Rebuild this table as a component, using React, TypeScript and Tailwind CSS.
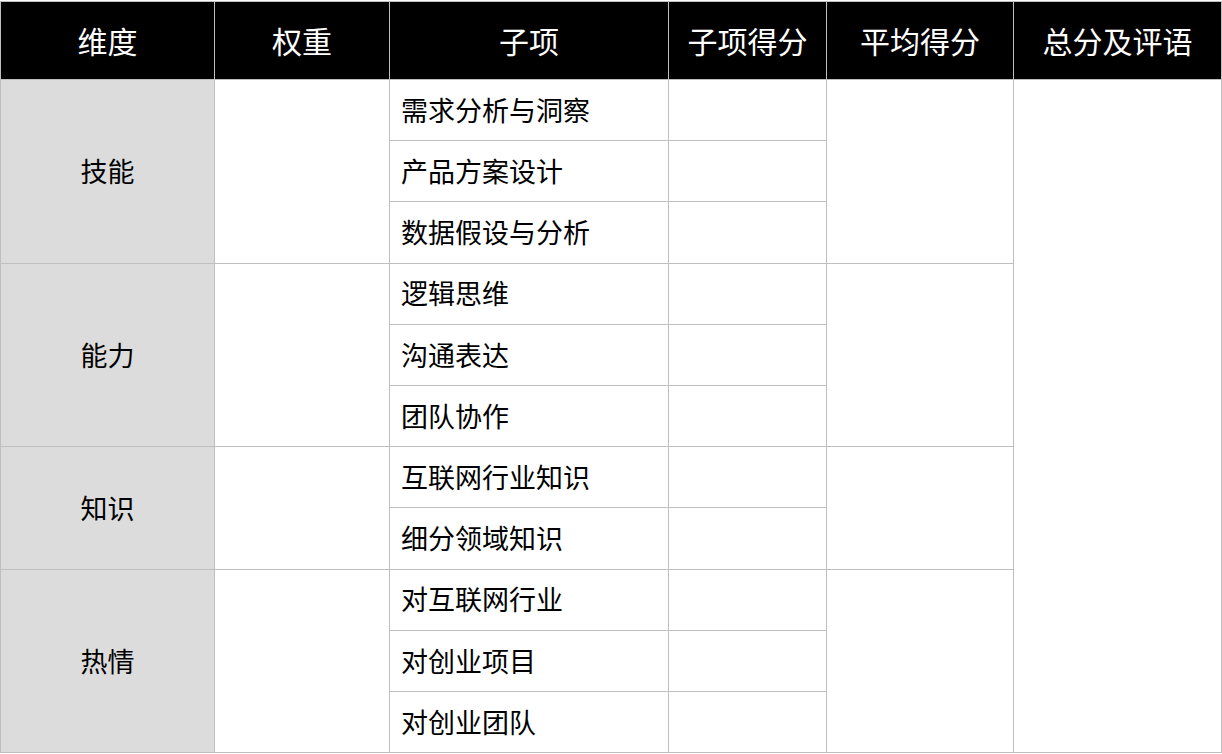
const headers = ["维度", "权重", "子项", "子项得分", "平均得分", "总分及评语"];

const groups = [
  {name: "技能", items: ["需求分析与洞察", "产品方案设计", "数据假设与分析"]},
  {name: "能力", items: ["逻辑思维", "沟通表达", "团队协作"]},
  {name: "知识", items: ["互联网行业知识", "细分领域知识"]},
  {name: "热情", items: ["对互联网行业", "对创业项目", "对创业团队"]},
];

const totalRows = groups.reduce((n, g) => n + g.items.length, 0);

export default function App() {
  return (
    <div className="w-[1222px] h-[754px] bg-white pt-px" style={{fontFamily: '"Noto Sans CJK SC", "Noto Sans", sans-serif'}}>
      <table className="w-[1221px] table-fixed border-collapse border border-[#bfbfbf]">
        <colgroup>
          <col className="w-[214px]"/>
          <col className="w-[175px]"/>
          <col className="w-[279px]"/>
          <col className="w-[158px]"/>
          <col className="w-[187px]"/>
          <col className="w-[208px]"/>
        </colgroup>
        <thead>
          <tr className="h-[78px] bg-black">
            {headers.map((h) => (
              <th key={h} className="border border-[#bfbfbf] text-white text-[30px] font-normal text-center align-middle">
                {h}
              </th>
            ))}
          </tr>
        </thead>
        <tbody>
          {groups.map((g, gi) =>
            g.items.map((item, i) => (
              <tr key={item} className="h-[61.2px]">
                {i === 0 && (
                  <>
                    <td rowSpan={g.items.length} className="border border-[#bfbfbf] bg-[#dcdcdc] text-[27px] text-black text-center align-middle">
                      {g.name}
                    </td>
                    <td rowSpan={g.items.length} className="border border-[#bfbfbf] bg-white"/>
                  </>
                )}
                <td className="border border-[#bfbfbf] text-[27px] text-black pl-[11px] align-middle whitespace-nowrap">
                  {item}
                </td>
                <td className="border border-[#bfbfbf]"/>
                {i === 0 && <td rowSpan={g.items.length} className="border border-[#bfbfbf]"/>}
                {gi === 0 && i === 0 && <td rowSpan={totalRows} className="border border-[#bfbfbf]"/>}
              </tr>
            ))
          )}
        </tbody>
      </table>
    </div>
  );
}
